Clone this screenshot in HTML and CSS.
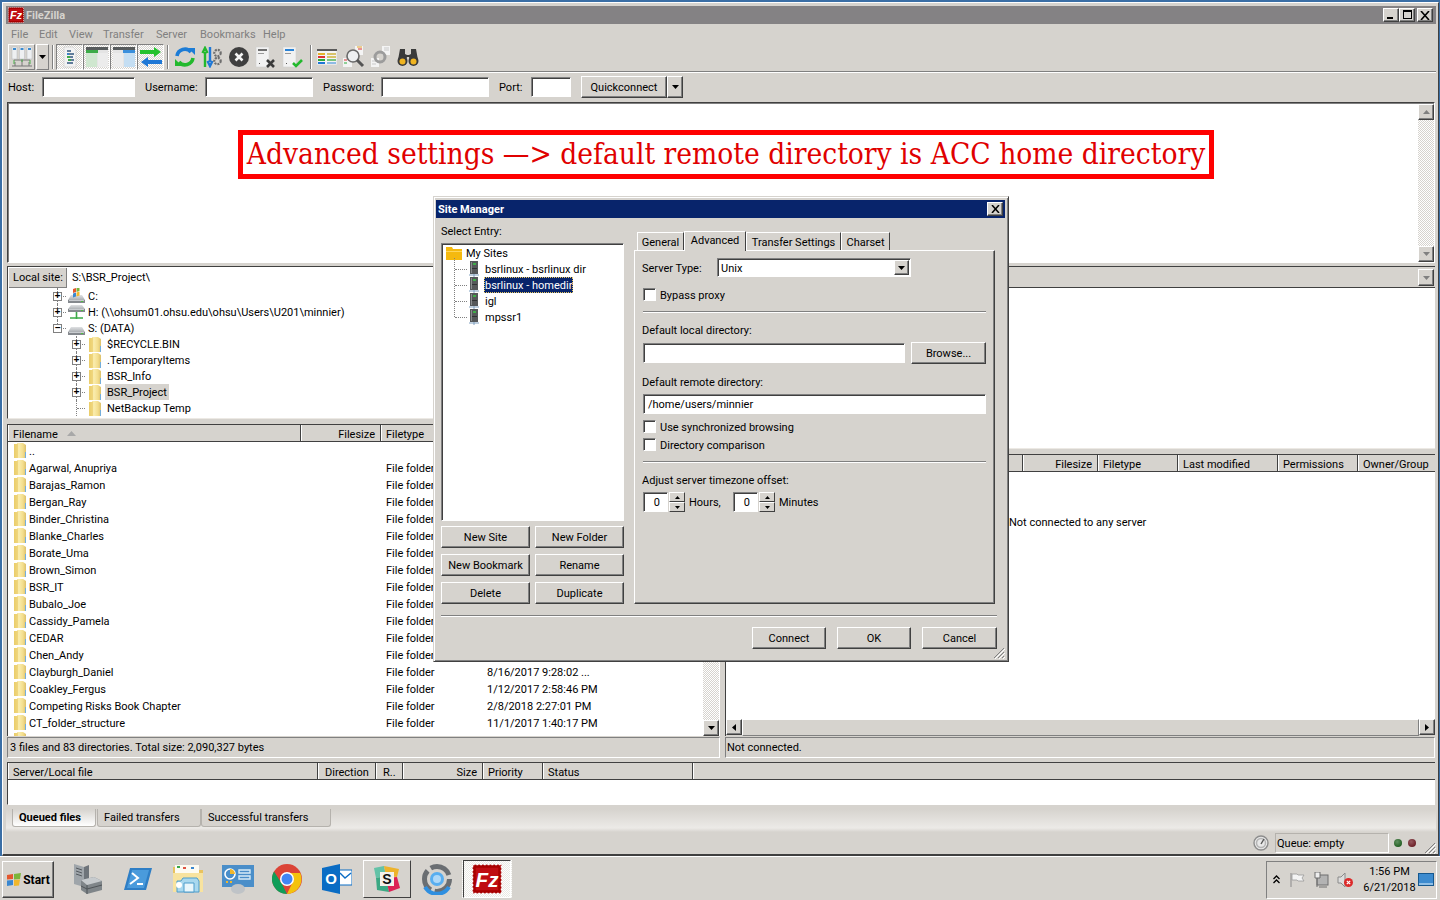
FILE: index.html
```html
<!DOCTYPE html>
<html lang="en">
<head>
<meta charset="utf-8">
<title>FileZilla</title>
<link rel="stylesheet" href="styles.css">
</head>
<body>
<svg class="defs" aria-hidden="true">
  <defs>
    <linearGradient id="fg" x1="0" x2="1" y1="0" y2="0">
      <stop offset="0" stop-color="#e6c65a"/><stop offset=".4" stop-color="#faedae"/><stop offset=".75" stop-color="#f3dd8c"/><stop offset="1" stop-color="#dcc06a"/>
    </linearGradient>
    <linearGradient id="dg" x1="0" x2="0" y1="0" y2="1">
      <stop offset="0" stop-color="#dfe1e3"/><stop offset="1" stop-color="#8b9095"/>
    </linearGradient>
    <symbol id="folder" viewBox="0 0 14 17">
      <path d="M1 2h3l1-1h5l3 2v13H1z" fill="url(#fg)"/>
      <path d="M1 2h3l1-1v15H1z" fill="#ecd070" opacity=".7"/>
      <path d="M12 10h1v6h-1z" fill="#74aedb"/>
    </symbol>
    <symbol id="server" viewBox="0 0 10 16">
      <path d="M5 12v4M0 14h10" stroke="#7f9fbf" fill="none"/>
      <rect x="1" y="0" width="8" height="13" fill="#55585a"/>
      <rect x="2" y="1" width="1" height="11" fill="#8a8d8f"/>
      <rect x="4" y="2" width="3" height="2" fill="#3fae49"/>
      <rect x="3" y="7" width="5" height="1" fill="#303234"/>
    </symbol>
    <symbol id="fz" viewBox="0 0 48 48">
      <rect x="1" y="1" width="46" height="46" fill="#a80000"/>
      <rect x="1" y="1" width="46" height="46" fill="none" stroke="#fff" stroke-width="2" stroke-dasharray="3 3"/>
      <rect x="6" y="6" width="36" height="36" fill="#bf0d12"/>
      <text x="24" y="36" text-anchor="middle" font-family="Liberation Sans" font-size="33" font-weight="700" font-style="italic" fill="#fff">Fz</text>
    </symbol>
    <symbol id="drive" viewBox="0 0 17 16">
      <path d="M3 7h11l3 5v3H0v-3z" fill="url(#dg)"/>
      <path d="M0 12h17v3H0z" fill="#85898e"/>
      <path d="M1 12h15v1H1z" fill="#c9ccd0"/>
      <rect x="13" y="13" width="2" height="1" fill="#4ec13f"/>
    </symbol>
    <symbol id="drive-c" viewBox="0 0 17 16">
      <use href="#drive"/>
      <path d="M5 1l3-1v4l-3 1z" fill="#e4572e"/><path d="M8.500 0l3-1v4l-3 1z" fill="#7cb53a"/>
      <path d="M5 5.500l3-1v4l-3 1z" fill="#3a87d0"/><path d="M8.500 4.500l3-1v4l-3 1z" fill="#f1b72b"/>
    </symbol>
    <symbol id="drive-net" viewBox="0 0 17 16">
      <path d="M3 1h11l3 4v3H0V5z" fill="url(#dg)"/>
      <path d="M0 5h17v3H0z" fill="#85898e"/>
      <path d="M1 5h15v1H1z" fill="#c9ccd0"/>
      <rect x="13" y="6" width="2" height="1" fill="#4ec13f"/>
      <path d="M8.500 8v4M2 14h13M8.500 12v3" stroke="#3cab48" stroke-width="1.600" fill="none"/>
    </symbol>
  </defs>
</svg>

<div class="window">
  <header class="titlebar">
    <svg class="title-logo" width="16" height="16"><use href="#fz"/></svg>
    <span class="title-text">FileZilla</span>
    <div class="caption-btns">
      <button class="caption"><svg width="10" height="10" viewBox="0 0 10 10"><path d="M1 7h6v2H1z"/></svg></button>
      <button class="caption"><svg width="11" height="10" viewBox="0 0 11 10"><path d="M1 0h9v9H1zM2 2v6h7V2z" fill-rule="evenodd"/></svg></button>
      <button class="caption caption-close"><svg width="10" height="9" viewBox="0 0 10 9"><path d="M1 0l8 9M9 0L1 9" stroke="#000" stroke-width="1.6" fill="none"/></svg></button>
    </div>
  </header>

  <nav class="menubar">
    <span class="menu m-file">File</span><span class="menu m-edit">Edit</span><span class="menu m-view">View</span><span class="menu m-transfer">Transfer</span><span class="menu m-server">Server</span><span class="menu m-bookmarks">Bookmarks</span><span class="menu m-help">Help</span>
  </nav>

  <div class="toolbar">
    <button class="tool tool-sm">
      <svg width="22" height="22" viewBox="0 0 22 22">
        <path d="M1 20h20M4 20v-4M11 20v-6M18 20v-4M3 14h16" stroke="#777" fill="none"/>
        <path d="M3 14l0 4M11 12v4M19 14v4" stroke="#4bb04b" fill="none"/>
        <rect x="1" y="1" width="5" height="12" fill="#eef0f2" stroke="#b5b9bd" stroke-width=".5"/><rect x="2" y="2" width="3" height="2" fill="#3c8bd0"/>
        <rect x="8.5" y="1" width="5" height="12" fill="#eef0f2" stroke="#b5b9bd" stroke-width=".5"/><rect x="9.5" y="2" width="3" height="2" fill="#3c8bd0"/>
        <rect x="16" y="1" width="5" height="12" fill="#eef0f2" stroke="#b5b9bd" stroke-width=".5"/><rect x="17" y="2" width="3" height="2" fill="#3c8bd0"/>
      </svg>
    </button>
    <button class="tool-drop"><svg width="7" height="4" viewBox="0 0 7 4"><path d="M0 0h7L3.500 4z"/></svg></button>
    <span class="tool-sep tool-sep-a"></span>
    <button class="tool tool-on">
      <svg width="18" height="22" viewBox="0 0 18 22">
        <path d="M3 1h9l3 3v17H3z" fill="#f2f2f2" stroke="#c9c9c9" stroke-width=".6"/>
        <path d="M6 5h4M7 8h6M6 11h6M7 14h6M6 17h6" stroke-width="2" fill="none" stroke="#607d9b"/>
        <path d="M6 11h3M7 14h3" stroke-width="2" fill="none" stroke="#3ea84c"/>
        <path d="M6 8h2" stroke-width="2" fill="none" stroke="#3a83c9"/>
      </svg>
    </button>
    <button class="tool tool-on">
      <svg width="22" height="20" viewBox="0 0 22 20">
        <rect x="0" y="0" width="22" height="20" fill="#e4e4e4"/>
        <rect x="0" y="0" width="22" height="3" fill="#575b5c"/>
        <rect x="0" y="3" width="12" height="3" fill="#3cab48"/>
        <rect x="0" y="6" width="11" height="14" fill="#cfe7cf"/>
        <rect x="12" y="6" width="10" height="14" fill="#ececec"/>
      </svg>
    </button>
    <button class="tool tool-on">
      <svg width="22" height="20" viewBox="0 0 22 20">
        <rect x="0" y="0" width="22" height="20" fill="#e4e4e4"/>
        <rect x="0" y="0" width="22" height="3" fill="#575b5c"/>
        <rect x="10" y="3" width="12" height="3" fill="#3a8fdc"/>
        <rect x="0" y="6" width="10" height="14" fill="#ececec"/>
        <rect x="11" y="6" width="11" height="14" fill="#c4def3"/>
      </svg>
    </button>
    <button class="tool tool-on">
      <svg width="22" height="20" viewBox="0 0 22 20">
        <path d="M0 3h14V0l7 5-7 5V7H0z" fill="#25c22e"/>
        <path d="M22 13H8v-3l-7 5 7 5v-3h14z" fill="#1f78d6"/>
      </svg>
    </button>
    <span class="tool-sep"></span>
    <span class="ticon ticon-first">
      <svg width="22" height="22" viewBox="0 0 22 22">
        <path d="M3 10a8 8 0 0 1 14-4" stroke="#1c7cd6" stroke-width="3.600" fill="none"/>
        <path d="M14 2h7v7z" fill="#1c7cd6"/>
        <path d="M19 12a8 8 0 0 1-14 4" stroke="#23b92d" stroke-width="3.600" fill="none"/>
        <path d="M8 20H1v-7z" fill="#23b92d"/>
      </svg>
    </span>
    <span class="ticon">
      <svg width="22" height="22" viewBox="0 0 22 22">
        <path d="M4 21V6M1.500 7L4 2l2.500 5" stroke="#23b92d" stroke-width="2.400" fill="none"/>
        <path d="M9 1v15M6.500 15L9 20l2.500-5" stroke="#1f78d6" stroke-width="2.400" fill="none"/>
        <circle cx="16.500" cy="7" r="3.200" fill="none" stroke="#6e6e6e" stroke-width="2.200" stroke-dasharray="2 1"/>
        <circle cx="16.500" cy="15" r="3.200" fill="none" stroke="#6e6e6e" stroke-width="2.200" stroke-dasharray="2 1"/>
      </svg>
    </span>
    <span class="ticon">
      <svg width="22" height="22" viewBox="0 0 22 22">
        <circle cx="11" cy="11" r="10" fill="#3f3f3f"/>
        <path d="M7.500 7.500l7 7M14.500 7.500l-7 7" stroke="#f4f4f4" stroke-width="2.600"/>
      </svg>
    </span>
    <span class="ticon">
      <svg width="22" height="22" viewBox="0 0 22 22">
        <path d="M1 1h13v20H1z" fill="#f2f2f2" stroke="#d0d0d0" stroke-width=".6"/>
        <path d="M3 3h9v2H3z" fill="#6f6f6f"/><path d="M3 7h6v1H3z" fill="#9a9a9a"/>
        <path d="M4 17h1v1H4z" fill="#555"/>
        <path d="M12 14l7 7M19 14l-7 7" stroke="#3a3a3a" stroke-width="2.600"/>
      </svg>
    </span>
    <span class="ticon ticon-end">
      <svg width="22" height="22" viewBox="0 0 22 22">
        <path d="M1 1h13v20H1z" fill="#f2f2f2" stroke="#d0d0d0" stroke-width=".6"/>
        <path d="M3 3h9v2H3z" fill="#2a83d6"/><path d="M3 7h6v1H3z" fill="#9a9a9a"/>
        <path d="M4 17h1v1H4z" fill="#555"/>
        <path d="M11 17l3 3 6-6" stroke="#23b92d" stroke-width="2.600" fill="none"/>
      </svg>
    </span>
    <span class="tool-sep tool-sep-c"></span>
    <span class="ticon">
      <svg width="20" height="16" viewBox="0 0 20 16">
        <rect width="20" height="16" fill="#f4f4f4" stroke="#c7c7c7" stroke-width=".5"/>
        <rect width="20" height="2" fill="#5a5a5a"/>
        <path d="M1 5h7" stroke="#e5b42b" stroke-width="2"/><path d="M1 8h7" stroke="#d33" stroke-width="2"/><path d="M1 11h7" stroke="#2cab3a" stroke-width="2"/><path d="M1 14h7" stroke="#1f78d6" stroke-width="2"/>
        <path d="M10 5h9M10 8h9" stroke="#d8c36a" stroke-width="2"/><path d="M10 11h9" stroke="#7ac47f" stroke-width="2"/><path d="M10 14h9" stroke="#8ebbe4" stroke-width="2"/>
      </svg>
    </span>
    <span class="ticon">
      <svg width="22" height="22" viewBox="0 0 22 22">
        <path d="M12 0h8v9h-8z" fill="#f4f4f4"/><path d="M14 1h5" stroke="#e5a52b"/><path d="M15 3h4" stroke="#d33"/>
        <path d="M0 12h9v9H0z" fill="#f4f4f4"/><path d="M1 14h3" stroke="#d33"/><path d="M1 17h3" stroke="#2cab3a"/>
        <circle cx="10" cy="10" r="6" fill="#eef0f1" stroke="#6a6a6a" stroke-width="1.600"/>
        <path d="M14 14l6 6" stroke="#555" stroke-width="3"/>
      </svg>
    </span>
    <span class="ticon">
      <svg width="20" height="22" viewBox="0 0 20 22">
        <path d="M11 0h8v9h-8zM0 12h8v9H0z" fill="#f4f4f4"/>
        <path d="M13 2h5M13 4h5M1 15h4M1 18h4" stroke="#c9c9c9"/>
        <circle cx="9" cy="11" r="5" fill="none" stroke="#9c9c9c" stroke-width="3"/>
      </svg>
    </span>
    <span class="ticon">
      <svg width="22" height="20" viewBox="0 0 22 20">
        <path d="M3 2h5v5l2 1h2l2-1V2h5l2 11H13l-1-3h-2l-1 3H1z" fill="#3a3a3a"/>
        <circle cx="5.500" cy="14" r="5" fill="#3a3a3a"/><circle cx="16.500" cy="14" r="5" fill="#3a3a3a"/>
        <circle cx="5.500" cy="14.500" r="3" fill="#f0b420"/><circle cx="16.500" cy="14.500" r="3" fill="#f0b420"/>
      </svg>
    </span>
  </div>

  <div class="quickbar">
    <label class="qk-label qk-host">Host:</label><span class="field qk-f1"></span>
    <label class="qk-label qk-user">Username:</label><span class="field qk-f2"></span>
    <label class="qk-label qk-pass">Password:</label><span class="field qk-f3"></span>
    <label class="qk-label qk-port">Port:</label><span class="field qk-f4"></span>
    <button class="btn qk-connect">Quickconnect</button><button class="btn qk-drop"><svg width="7" height="4" viewBox="0 0 7 4"><path d="M0 0h7L3.500 4z"/></svg></button>
  </div>

  <section class="log">
    <div class="vscroll">
      <span class="arrow-btn"><svg width="7" height="4" viewBox="0 0 7 4"><path d="M3.500 0L7 4H0z" fill="#808080"/></svg></span>
      <span class="track"></span>
      <span class="arrow-btn"><svg width="7" height="4" viewBox="0 0 7 4"><path d="M0 0h7L3.500 4z" fill="#808080"/></svg></span>
    </div>
  </section>

  <div class="panes">
    <section class="pane">
      <div class="site-row">
        <span class="site-label">Local site:</span>
        <span class="site-input">S:\BSR_Project\</span>
      </div>
      <div class="tree">
        <div class="tree-row lvl0 line-full"><span class="branch"><i class="twist">+</i></span><svg class="drive-ic" width="17" height="16"><use href="#drive-c"/></svg><span class="node node-d">C:</span></div>
        <div class="tree-row lvl0 line-full"><span class="branch"><i class="twist">+</i></span><svg class="drive-ic" width="17" height="16"><use href="#drive-net"/></svg><span class="node node-d">H: (\\ohsum01.ohsu.edu\ohsu\Users\U201\minnier)</span></div>
        <div class="tree-row lvl0 line-top"><span class="branch"><i class="twist">−</i></span><svg class="drive-ic" width="17" height="16"><use href="#drive"/></svg><span class="node node-d">S: (DATA)</span></div>
        <div class="tree-row lvl1 line-full"><span class="branch"><i class="twist">+</i></span><svg class="folder-ic" width="14" height="17"><use href="#folder"/></svg><span class="node">$RECYCLE.BIN</span></div>
        <div class="tree-row lvl1 line-full"><span class="branch"><i class="twist">+</i></span><svg class="folder-ic" width="14" height="17"><use href="#folder"/></svg><span class="node">.TemporaryItems</span></div>
        <div class="tree-row lvl1 line-full"><span class="branch"><i class="twist">+</i></span><svg class="folder-ic" width="14" height="17"><use href="#folder"/></svg><span class="node">BSR_Info</span></div>
        <div class="tree-row lvl1 line-full"><span class="branch"><i class="twist">+</i></span><svg class="folder-ic" width="14" height="17"><use href="#folder"/></svg><span class="node node-sel">BSR_Project</span></div>
        <div class="tree-row lvl1 line-full"><span class="branch"></span><svg class="folder-ic" width="14" height="17"><use href="#folder"/></svg><span class="node">NetBackup Temp</span></div>
      </div>
      <div class="col-head local-head">
        <span class="col c-name">Filename<svg class="sort" width="9" height="5" viewBox="0 0 9 5"><path d="M4.500 0L9 5H0z" fill="#a8a8a8"/></svg></span>
        <span class="col c-size">Filesize</span>
        <span class="col c-type">Filetype</span>
      </div>
      <div class="list local-list">
        <div class="rows">
          <div class="row"><svg class="row-ic" width="14" height="17"><use href="#folder"/></svg><span class="r-name">..</span></div>
          <div class="row"><svg class="row-ic" width="14" height="17"><use href="#folder"/></svg><span class="r-name">Agarwal, Anupriya</span><span class="r-type">File folder</span></div>
          <div class="row"><svg class="row-ic" width="14" height="17"><use href="#folder"/></svg><span class="r-name">Barajas_Ramon</span><span class="r-type">File folder</span></div>
          <div class="row"><svg class="row-ic" width="14" height="17"><use href="#folder"/></svg><span class="r-name">Bergan_Ray</span><span class="r-type">File folder</span></div>
          <div class="row"><svg class="row-ic" width="14" height="17"><use href="#folder"/></svg><span class="r-name">Binder_Christina</span><span class="r-type">File folder</span></div>
          <div class="row"><svg class="row-ic" width="14" height="17"><use href="#folder"/></svg><span class="r-name">Blanke_Charles</span><span class="r-type">File folder</span></div>
          <div class="row"><svg class="row-ic" width="14" height="17"><use href="#folder"/></svg><span class="r-name">Borate_Uma</span><span class="r-type">File folder</span></div>
          <div class="row"><svg class="row-ic" width="14" height="17"><use href="#folder"/></svg><span class="r-name">Brown_Simon</span><span class="r-type">File folder</span></div>
          <div class="row"><svg class="row-ic" width="14" height="17"><use href="#folder"/></svg><span class="r-name">BSR_IT</span><span class="r-type">File folder</span></div>
          <div class="row"><svg class="row-ic" width="14" height="17"><use href="#folder"/></svg><span class="r-name">Bubalo_Joe</span><span class="r-type">File folder</span></div>
          <div class="row"><svg class="row-ic" width="14" height="17"><use href="#folder"/></svg><span class="r-name">Cassidy_Pamela</span><span class="r-type">File folder</span></div>
          <div class="row"><svg class="row-ic" width="14" height="17"><use href="#folder"/></svg><span class="r-name">CEDAR</span><span class="r-type">File folder</span></div>
          <div class="row"><svg class="row-ic" width="14" height="17"><use href="#folder"/></svg><span class="r-name">Chen_Andy</span><span class="r-type">File folder</span></div>
          <div class="row"><svg class="row-ic" width="14" height="17"><use href="#folder"/></svg><span class="r-name">Clayburgh_Daniel</span><span class="r-type">File folder</span><span class="r-date">8/16/2017 9:28:02 ...</span></div>
          <div class="row"><svg class="row-ic" width="14" height="17"><use href="#folder"/></svg><span class="r-name">Coakley_Fergus</span><span class="r-type">File folder</span><span class="r-date">1/12/2017 2:58:46 PM</span></div>
          <div class="row"><svg class="row-ic" width="14" height="17"><use href="#folder"/></svg><span class="r-name">Competing Risks Book Chapter</span><span class="r-type">File folder</span><span class="r-date">2/8/2018 2:27:01 PM</span></div>
          <div class="row"><svg class="row-ic" width="14" height="17"><use href="#folder"/></svg><span class="r-name">CT_folder_structure</span><span class="r-type">File folder</span><span class="r-date">11/1/2017 1:40:17 PM</span></div>
          <div class="row"><svg class="row-ic" width="14" height="17"><use href="#folder"/></svg></div>
        </div>
        <div class="vscroll vscroll-list">
          <span class="track"></span>
          <span class="arrow-btn"><svg width="7" height="4" viewBox="0 0 7 4"><path d="M0 0h7L3.500 4z"/></svg></span>
        </div>
      </div>
      <div class="pane-status">3 files and 83 directories. Total size: 2,090,327 bytes</div>
    </section>

    <section class="pane">
      <div class="site-row site-row-off">
        <span class="combo-btn"><svg width="7" height="4" viewBox="0 0 7 4"><path d="M0 0h7L3.500 4z" fill="#808080"/></svg></span>
      </div>
      <div class="tree tree-remote"></div>
      <div class="col-head remote-head">
        <span class="col c-rname"></span>
        <span class="col c-rsize">Filesize</span>
        <span class="col c-rtype">Filetype</span>
        <span class="col c-rmod">Last modified</span>
        <span class="col c-rperm">Permissions</span>
        <span class="col c-rown">Owner/Group</span>
      </div>
      <div class="list remote-list">
        <p class="not-conn">Not connected to any server</p>
      </div>
      <div class="hscroll">
        <span class="arrow-btn"><svg width="4" height="7" viewBox="0 0 4 7"><path d="M4 0v7L0 3.500z"/></svg></span>
        <span class="hs-thumb"></span>
        <span class="arrow-btn"><svg width="4" height="7" viewBox="0 0 4 7"><path d="M0 0v7l4-3.500z"/></svg></span>
      </div>
      <div class="pane-status pane-status-r">Not connected.</div>
    </section>
  </div>

  <section class="queue">
    <div class="col-head queue-head">
      <span class="col q-file">Server/Local file</span>
      <span class="col q-dir">Direction</span>
      <span class="col q-r">R..</span>
      <span class="col q-size">Size</span>
      <span class="col q-prio">Priority</span>
      <span class="col q-status">Status</span>
      <span class="col q-rest"></span>
    </div>
    <div class="queue-body"></div>
  </section>

  <div class="tabstrip">
    <span class="qtab qtab-on">Queued files</span>
    <span class="qtab qtab-f">Failed transfers</span>
    <span class="qtab qtab-s">Successful transfers</span>
  </div>

  <footer class="statusbar">
    <svg class="speed" width="16" height="16" viewBox="0 0 16 16">
      <circle cx="8" cy="8" r="7" fill="#e8e8e8" stroke="#8d8d8d" stroke-width="1.400"/>
      <circle cx="8" cy="8" r="4.500" fill="none" stroke="#b5b5b5" stroke-width="1.500"/>
      <path d="M8 9l3-5" stroke="#555" stroke-width="1.400"/>
    </svg>
    <span class="queue-state">Queue: empty</span>
    <span class="led led-g"></span>
    <span class="led led-r"></span>
    <svg class="grip" width="12" height="12" viewBox="0 0 12 12"><path d="M11 1L1 11M11 5l-6 6M11 9l-2 2" stroke="#808080" fill="none"/><path d="M12 2L2 12M12 6l-6 6M12 10l-2 2" stroke="#fff" fill="none"/></svg>
  </footer>
</div>

<div class="banner">Advanced settings —&gt; default remote directory is ACC home directory</div>

<section class="dialog">
  <header class="dlg-title">
    <span class="dlg-name">Site Manager</span>
    <button class="caption dlg-close"><svg width="9" height="8" viewBox="0 0 9 8"><path d="M1 0l7 8M8 0L1 8" stroke="#000" stroke-width="1.500" fill="none"/></svg></button>
  </header>
  <div class="dlg-main">
    <div class="dlg-left">
      <div class="dlg-label">Select Entry:</div>
      <div class="site-tree">
        <div class="st-root">
          <svg width="16" height="13" viewBox="0 0 16 13"><path d="M0 0h6l1 2h9v11H0z" fill="#f5b90f"/><path d="M0 4h16v1H0z" fill="#ffd65a"/></svg>
          <span class="st-root-text">My Sites</span>
        </div>
        <div class="st-item"><span class="st-line"></span><svg width="10" height="16"><use href="#server"/></svg><span class="st-text">bsrlinux - bsrlinux dir</span></div>
        <div class="st-item"><span class="st-line"></span><svg width="10" height="16"><use href="#server"/></svg><span class="st-text st-sel">bsrlinux - homedir</span></div>
        <div class="st-item"><span class="st-line"></span><svg width="10" height="16"><use href="#server"/></svg><span class="st-text">igl</span></div>
        <div class="st-item st-last"><span class="st-line"></span><svg width="10" height="16"><use href="#server"/></svg><span class="st-text">mpssr1</span></div>
      </div>
      <div class="dlg-btns">
        <button class="btn">New Site</button>
        <button class="btn">New Folder</button>
        <button class="btn">New Bookmark</button>
        <button class="btn">Rename</button>
        <button class="btn">Delete</button>
        <button class="btn">Duplicate</button>
      </div>
    </div>
    <div class="dlg-right">
      <div class="tabs">
        <span class="tab tab-g">General</span>
        <span class="tab tab-a">Advanced</span>
        <span class="tab tab-t">Transfer Settings</span>
        <span class="tab tab-c">Charset</span>
      </div>
      <div class="tabpanel">
        <div class="form-row server-row">
          <span class="flabel fl-type">Server Type:</span>
          <span class="field select-field">Unix<span class="combo-btn combo-dark"><svg width="7" height="4" viewBox="0 0 7 4"><path d="M0 0h7L3.500 4z"/></svg></span></span>
        </div>
        <div class="check check-bypass"><span class="box"></span>Bypass proxy</div>
        <hr class="rule rule-1">
        <div class="flabel fl-local">Default local directory:</div>
        <div class="form-row browse-row">
          <span class="field local-field"></span>
          <button class="btn browse">Browse...</button>
        </div>
        <div class="flabel fl-remote">Default remote directory:</div>
        <span class="field remote-field">/home/users/minnier</span>
        <div class="check check-sync"><span class="box"></span>Use synchronized browsing</div>
        <div class="check check-dir"><span class="box"></span>Directory comparison</div>
        <hr class="rule rule-2">
        <div class="flabel fl-tz">Adjust server timezone offset:</div>
        <div class="form-row spin-row">
          <span class="field spin-field">0</span>
          <span class="spin"><span class="spin-b"><svg width="5" height="3" viewBox="0 0 5 3"><path d="M2.500 0L5 3H0z"/></svg></span><span class="spin-b"><svg width="5" height="3" viewBox="0 0 5 3"><path d="M0 0h5L2.500 3z"/></svg></span></span>
          <span class="spin-lab spin-hours">Hours,</span>
          <span class="field spin-field">0</span>
          <span class="spin"><span class="spin-b"><svg width="5" height="3" viewBox="0 0 5 3"><path d="M2.500 0L5 3H0z"/></svg></span><span class="spin-b"><svg width="5" height="3" viewBox="0 0 5 3"><path d="M0 0h5L2.500 3z"/></svg></span></span>
          <span class="spin-lab">Minutes</span>
        </div>
      </div>
    </div>
  </div>
  <hr class="rule dlg-rule">
  <div class="dlg-foot">
    <button class="btn foot-btn">Connect</button>
    <button class="btn foot-btn">OK</button>
    <button class="btn foot-btn foot-last">Cancel</button>
  </div>
  <svg class="dlg-grip" width="12" height="12" viewBox="0 0 12 12"><path d="M11 1L1 11M11 5l-6 6M11 9l-2 2" stroke="#808080" fill="none"/><path d="M12 2L2 12M12 6l-6 6M12 10l-2 2" stroke="#fff" fill="none"/></svg>
</section>

<div class="taskbar">
  <button class="start">
    <svg width="16" height="14" viewBox="0 0 16 14">
      <path d="M1 2l6-1v5l-6 .5z" fill="#e4572e"/><path d="M8 1l7-1-1 6-6 .5z" fill="#7cb53a"/>
      <path d="M1 7.500L7 7v5l-6 1z" fill="#3a87d0"/><path d="M8 7l6-.5-1 6-5 .5z" fill="#f1b72b"/>
    </svg>
    <span>Start</span>
  </button>
  <div class="task-icons">
    <span class="task">
      <svg width="30" height="32" viewBox="0 0 30 32">
        <path d="M1 1l10 3v20L1 21z" fill="#9fa5aa"/><path d="M11 4l5-2v21l-5 2z" fill="#6e747a"/>
        <path d="M3 5l6 2M3 8l6 2M3 11l6 2" stroke="#54595e" fill="none"/>
        <path d="M8 17l13-3 8 4v9l-15 4-6-4z" fill="#7f8589"/><path d="M8 17l13-3 8 4-15 4z" fill="#c6cacd"/>
        <path d="M14 22v9M8 23l6 3 15-4" stroke="#4f5458" fill="none"/>
      </svg>
    </span>
    <span class="task">
      <svg width="28" height="24" viewBox="0 0 28 24">
        <path d="M6 1h22l-6 22H0z" fill="#2e7ec5"/><path d="M8 3h17l-5 18H3z" fill="#4a9bdc"/>
        <path d="M8 6l6 5-8 6" stroke="#fff" stroke-width="2" fill="none"/><path d="M13 17h6" stroke="#fff" stroke-width="2"/>
      </svg>
    </span>
    <span class="task">
      <svg width="32" height="30" viewBox="0 0 32 30">
        <path d="M1 3h10l2 3h18v22H1z" fill="#e9c25e"/>
        <path d="M3 1h24v8H3z" fill="#fdfbf2"/><path d="M5 2h3v2H5z" fill="#3aa84a"/><path d="M11 3h3v2h-3z" fill="#d54"/><path d="M19 3h3v2h-3z" fill="#3a87d0"/>
        <path d="M1 9h30v19H1z" fill="#f8e39f"/>
        <path d="M5 17h4l2-3h14l2 3v11H5z" fill="#a9d8ee" stroke="#4d9ccb"/>
        <path d="M12 19h10v9H12z" fill="#e9f6fb" stroke="#4d9ccb"/>
        <circle cx="7" cy="21" r="3" fill="#fff"/>
      </svg>
    </span>
    <span class="task">
      <svg width="32" height="30" viewBox="0 0 32 30">
        <rect y="1" width="32" height="22" fill="#4a8ec9"/>
        <circle cx="8" cy="10" r="5" fill="none" stroke="#fff" stroke-width="1.600"/><path d="M8 10V5a5 5 0 0 1 5 5z" fill="#f1b72b"/>
        <path d="M17 6h11v3H17zM17 12h11v3H17z" fill="none" stroke="#d7ebf8" stroke-width="1.400"/>
        <path d="M4 18h2M8 18h2" stroke="#f1b72b" stroke-width="2"/>
        <ellipse cx="16" cy="25" rx="7" ry="5" fill="#bfc3c7"/>
      </svg>
    </span>
    <span class="task">
      <svg width="30" height="30" viewBox="0 0 30 30">
        <circle cx="15" cy="15" r="15" fill="#db4437"/>
        <path d="M15 30a15 15 0 0 1-13-22.500L10 20l5 10z" fill="#0f9d58"/>
        <path d="M15 30l6-12.500L15 9h13.200A15 15 0 0 1 15 30z" fill="#f4c20d"/>
        <circle cx="15" cy="15" r="7" fill="#fff"/><circle cx="15" cy="15" r="5.500" fill="#4285f4"/>
      </svg>
    </span>
    <span class="task">
      <svg width="30" height="30" viewBox="0 0 30 30">
        <path d="M17 6h13v15H17z" fill="#fff" stroke="#0a6cc4"/>
        <path d="M18 9l5 5 6-5" stroke="#0a6cc4" stroke-width="1.400" fill="none"/>
        <path d="M0 4l18-4v30L0 26z" fill="#0a6cc4"/>
        <text x="9" y="20" text-anchor="middle" font-family="Liberation Sans" font-size="15" font-weight="700" fill="#fff">O</text>
      </svg>
    </span>
    <span class="task task-raised">
      <svg width="26" height="26" viewBox="0 0 26 26">
        <path d="M0 2l10-2 2 10L2 12z" fill="#63c2a7"/>
        <path d="M10 0l15 3-2 8-11-1z" fill="#edb32c"/>
        <path d="M2 12l10-2 3 16-12-2z" fill="#3ba883"/>
        <path d="M12 12l11-1 3 11-11 4z" fill="#dc2155"/>
        <rect x="6" y="6" width="14" height="14" fill="#f4f1ea"/>
        <text x="13" y="18" text-anchor="middle" font-family="Liberation Sans" font-size="14" font-weight="700" fill="#111">S</text>
      </svg>
    </span>
    <span class="task">
      <svg width="32" height="32" viewBox="0 0 32 32">
        <circle cx="16" cy="16" r="12.500" fill="none" stroke="#6a6e72" stroke-width="5" stroke-dasharray="22 4"/>
        <path d="M4 24a14 14 0 0 0 24 0" stroke="#2f8fe0" stroke-width="4" fill="none"/>
        <circle cx="16" cy="16" r="7" fill="#58aef0"/><circle cx="16" cy="16" r="4" fill="#aed8f8"/>
      </svg>
    </span>
    <span class="task task-pressed"><svg width="30" height="30"><use href="#fz"/></svg></span>
  </div>
  <div class="tray">
    <svg class="tray-ic" width="7" height="9" viewBox="0 0 7 9"><path d="M.5 4l3-3 3 3M.5 8l3-3 3 3" stroke="#000" stroke-width="1.300" fill="none"/></svg>
    <svg class="tray-ic tray-flag" width="16" height="16" viewBox="0 0 16 16"><path d="M1.500 1v14h1V1z" fill="#8a8a8a"/><path d="M3 2h5l1 1h6l-2 3 2 3H9L8 8H3z" fill="#f4f4f4" stroke="#9a9a9a" stroke-width=".8"/></svg>
    <svg class="tray-ic" width="16" height="16" viewBox="0 0 16 16"><rect x="4" y="3" width="11" height="10" fill="#b3b3b3" stroke="#6e6e6e"/><path d="M2 0h5v6H2zM4 6v9" fill="#eee" stroke="#6e6e6e"/><path d="M6 15h8" stroke="#6e6e6e"/></svg>
    <svg class="tray-ic" width="16" height="16" viewBox="0 0 16 16"><path d="M1 5h3l4-4v14l-4-4H1z" fill="#ddd" stroke="#8a8a8a"/><circle cx="11.500" cy="10.500" r="4.500" fill="#dc2a2a"/><path d="M9.800 8.800l3.400 3.400M13.200 8.800l-3.400 3.400" stroke="#fff" stroke-width="1.200"/></svg>
    <div class="clock"><div>1:56 PM</div><div>6/21/2018</div></div>
    <svg class="tray-show" width="16" height="13" viewBox="0 0 16 13"><rect width="16" height="13" fill="#16588e"/><rect x="1" y="1" width="14" height="9" fill="#3c8bcf"/><path d="M1 10h14v2H1z" fill="#8fbfe6"/></svg>
  </div>
</div>
</body>
</html>
```

FILE: styles.css
```css
* { box-sizing: border-box; }
html, body { margin: 0; height: 100%; }
body {
  width: 1440px;
  height: 900px;
  overflow: hidden;
  position: relative;
  display: flex;
  flex-direction: column;
  background: #3a6ea5;
  font: 11px/14px Roboto, "Liberation Sans", Arial, sans-serif;
  color: #000;
}
button {
  font: inherit;
  color: inherit;
  padding: 0;
  margin: 0;
  cursor: default;
}
.defs { position: absolute; width: 0; height: 0; }

/* shared chrome */
.btn {
  height: 22px;
  padding-top: 2px;
  background: #d6d3ce;
  border: 1px solid;
  border-color: #fff #404040 #404040 #fff;
  box-shadow: inset -1px -1px 0 #808080;
}
.field {
  display: block;
  height: 20px;
  background: #fff;
  border: 1px solid;
  border-color: #808080 #fff #fff #808080;
  box-shadow: inset 1px 1px 0 #404040;
  padding: 3px 0 0 4px;
}

/* main window */
.window {
  width: 1437px;
  height: 854px;
  margin: 2px 0 0 2px;
  padding: 3px 2px 0 3px;
  border: 1px solid #fff;
  border-right: 1px solid #404040;
  border-bottom: 2px solid #404040;
  background: #d6d3ce;
  flex: none;
  display: flex;
  flex-direction: column;
}
.titlebar {
  height: 18px;
  flex: none;
  background: #848284;
  display: flex;
  align-items: center;
  padding: 0 3px 0 2px;
}
.title-text { margin-left: 2px; padding-top: 2px; font-weight: 700; font-size: 11px; color: #d6d3ce; }
.caption-btns { margin-left: auto; display: flex; }
.caption {
  width: 16px;
  height: 14px;
  background: #d6d3ce;
  border: 1px solid;
  border-color: #fff #404040 #404040 #fff;
  box-shadow: inset -1px -1px 0 #808080;
  display: flex;
  align-items: center;
  justify-content: center;
}
.caption-close { margin-left: 2px; }

.menubar {
  height: 18px;
  margin-top: 1px;
  flex: none;
  display: flex;
  align-items: center;
  color: #808080;
}
.menu { padding-top: 2px; }
.m-file { margin-left: 5px; width: 28px; }
.m-edit { width: 30px; }
.m-view { width: 34px; }
.m-transfer { width: 53px; }
.m-server { width: 44px; }
.m-bookmarks { width: 63px; }

.toolbar {
  height: 28px;
  margin-top: 1px;
  flex: none;
  display: flex;
  align-items: flex-start;
  border-bottom: 1px solid #808080;
  padding-left: 2px;
}
.tool {
  width: 27px;
  height: 26px;
  display: flex;
  align-items: center;
  justify-content: center;
  background: #d6d3ce;
  border: 1px solid;
  flex: none;
}
.tool-sm { border-color: #fff #808080 #808080 #fff; }
.tool-drop {
  width: 13px;
  height: 26px;
  margin-left: 1px;
  background: #d6d3ce;
  border: 1px solid;
  border-color: #fff #808080 #808080 #fff;
  display: flex;
  align-items: center;
  justify-content: center;
}
.tool-on {
  border-color: #808080 #fff #fff #808080;
  background: repeating-conic-gradient(#fff 0 25%, #d6d3ce 0 50%) 0 0 / 2px 2px;
}
.tool-sep {
  width: 2px;
  height: 24px;
  margin: 1px 3px 0;
  border-left: 1px solid #808080;
  border-right: 1px solid #fff;
  flex: none;
}
.tool-sep-a { margin: 1px 2px 0 3px; }
.tool-sep-c { margin: 1px 4px 0 1px; }
.ticon {
  width: 22px;
  height: 26px;
  display: flex;
  align-items: center;
  justify-content: center;
  flex: none;
  margin-right: 5px;
}
.ticon-first { margin-left: 2px; }

.quickbar {
  height: 30px;
  flex: none;
  display: flex;
  align-items: center;
  border-top: 1px solid #fff;
  padding-bottom: 2px;
}
.qk-label { padding-top: 2px; }
.qk-host { margin-left: 2px; width: 34px; }
.qk-f1 { width: 93px; }
.qk-user { margin-left: 10px; width: 60px; }
.qk-f2 { width: 108px; }
.qk-pass { margin-left: 10px; width: 58px; }
.qk-f3 { width: 108px; }
.qk-port { margin-left: 10px; width: 32px; }
.qk-f4 { width: 40px; }
.qk-connect { margin-left: 10px; width: 86px; height: 22px; }
.qk-drop { width: 16px; height: 22px; padding: 0; display: flex; align-items: center; justify-content: center; }

.log {
  height: 161px;
  margin: 0 1px;
  flex: none;
  background: #fff;
  border: 1px solid;
  border-color: #404040 #fff #fff #404040;
  box-shadow: inset 1px 1px 0 #808080;
  display: flex;
  justify-content: flex-end;
  padding-top: 1px;
}
.vscroll {
  width: 16px;
  display: flex;
  flex-direction: column;
}
.arrow-btn {
  flex: none;
  width: 16px;
  height: 16px;
  display: flex;
  align-items: center;
  justify-content: center;
  background: #d6d3ce;
  border: 1px solid;
  border-color: #fff #404040 #404040 #fff;
  box-shadow: inset -1px -1px 0 #808080;
}
.track {
  flex: 1;
  background: repeating-conic-gradient(#fff 0 25%, #d6d3ce 0 50%) 0 0 / 2px 2px;
}

/* panes */
.panes {
  height: 492px;
  margin: 3px 1px 0;
  flex: none;
  display: grid;
  grid-template-columns: 713px 710px;
  grid-template-rows: 492px;
  column-gap: 5px;
}
.pane { display: flex; flex-direction: column; min-width: 0; min-height: 0; }
.site-row {
  height: 22px;
  flex: none;
  display: flex;
  border-top: 1px solid #404040;
  border-left: 1px solid #404040;
  background: #fff;
}
.site-label {
  width: 60px;
  background: #d6d3ce;
  border-right: 1px solid #fff;
  padding: 4px 0 0 5px;
  box-shadow: inset 1px 1px 0 #fff, inset -1px -1px 0 #808080;
}
.site-input { padding: 4px 0 0 4px; }
.site-row-off {
  background: #d6d3ce;
  justify-content: flex-end;
  border-bottom: 1px solid #404040;
  padding: 2px 1px 0 0;
}
.combo-btn {
  width: 16px;
  height: 17px;
  display: flex;
  align-items: center;
  justify-content: center;
  background: #d6d3ce;
  border: 1px solid;
  border-color: #fff #404040 #404040 #fff;
  box-shadow: inset -1px -1px 0 #808080;
}
.tree {
  height: 131px;
  flex: none;
  overflow: hidden;
  background: #fff;
  border-left: 1px solid #404040;
  border-bottom: 1px solid #ece9e4;
  padding-top: 0;
}
.tree-remote { height: 161px; }
.tree-row {
  height: 16px;
  display: flex;
  align-items: center;
}
.lvl0 { padding-left: 42px; }
.lvl1 { padding-left: 61px; }
.branch {
  position: relative;
  width: 15px;
  height: 16px;
  flex: none;
  display: flex;
  align-items: center;
  justify-content: center;
}
.branch::before {
  content: "";
  position: absolute;
  left: 7px;
  width: 1px;
  top: 0;
  bottom: 0;
  border-left: 1px dotted #808080;
}
.line-top .branch::before { bottom: 8px; }
.branch::after {
  content: "";
  position: absolute;
  left: 8px;
  right: -1px;
  top: 8px;
  height: 1px;
  border-top: 1px dotted #808080;
}
.twist {
  position: relative;
  z-index: 1;
  width: 9px;
  height: 9px;
  border: 1px solid #808080;
  background: #fff;
  font: 700 10px/7px "Liberation Mono", monospace;
  text-align: center;
}
.drive-ic { margin-left: 3px; flex: none; }
.folder-ic { margin-left: 4px; flex: none; }
.node { padding: 2px 2px 0; margin-left: 3px; white-space: nowrap; }
.node-d { margin-left: 1px; }
.node-sel { background: #d6d3ce; }

.col-head {
  height: 18px;
  flex: none;
  margin-top: 5px;
  display: flex;
  background: #d6d3ce;
  border-top: 1px solid #404040;
  border-bottom: 1px solid #404040;
  border-left: 1px solid #404040;
}
.col {
  flex: none;
  height: 16px;
  padding: 3px 0 0 5px;
  border-right: 1px solid #404040;
  box-shadow: inset 1px 0 0 #fff;
  white-space: nowrap;
}
.c-name { width: 293px; display: flex; gap: 9px; }
.sort { margin-top: 3px; }
.c-size { width: 80px; text-align: right; padding-right: 5px; }
.c-type { width: 100px; }
.list {
  flex: 1;
  min-height: 0;
  display: flex;
  background: #fff;
  overflow: hidden;
  border-left: 1px solid #404040;
  position: relative;
}
.rows { flex: 1; min-width: 0; overflow: hidden; }
.row {
  height: 17px;
  display: flex;
  align-items: center;
  padding-left: 5px;
}
.row-ic { flex: none; }
.r-name { width: 357px; margin-left: 2px; padding-top: 2px; white-space: nowrap; }
.r-type { width: 101px; padding-top: 2px; white-space: nowrap; }
.r-date { padding-top: 2px; white-space: nowrap; }
.vscroll-list { margin-right: 1px; }
.pane-status {
  height: 21px;
  flex: none;
  margin-top: 1px;
  padding: 3px 0 0 2px;
  background: #d6d3ce;
  border-top: 1px solid #808080;
  border-left: 1px solid #808080;
  border-bottom: 1px solid #fff;
  border-right: 1px solid #fff;
  white-space: nowrap;
}
.pane-status-r { padding-left: 1px; }
.remote-head { margin-top: 5px; }
.c-rname { width: 297px; }
.c-rsize { width: 75px; text-align: right; padding-right: 5px; }
.c-rtype { width: 80px; }
.c-rmod { width: 100px; }
.c-rperm { width: 80px; }
.c-rown { width: 76px; border-right: 0; }
.not-conn { margin: 44px 0 0 283px; white-space: nowrap; }
.hscroll {
  height: 17px;
  flex: none;
  display: flex;
  background: #d6d3ce;
  border-left: 1px solid #404040;
}
.hs-thumb {
  flex: 1;
  border: 1px solid;
  border-color: #fff #808080 #808080 #fff;
}

/* queue */
.queue { margin: 4px 1px 0; flex: none; }
.queue-head { margin-top: 0; }
.q-file { width: 310px; }
.q-dir { width: 58px; padding-left: 7px; }
.q-r { width: 27px; padding-left: 7px; }
.q-size { width: 80px; text-align: right; padding-right: 5px; }
.q-prio { width: 60px; }
.q-status { width: 150px; }
.q-rest { flex: 1; border-right: 0; }
.queue-body {
  height: 25px;
  background: #fff;
  border-left: 1px solid #404040;
  border-bottom: 1px solid #fff;
}

.tabstrip {
  height: 27px;
  flex: none;
  padding: 4px 0 0 6px;
  display: flex;
  align-items: flex-start;
  background: linear-gradient(#d6d3ce 0, #d6d3ce 15%, #eceae7 85%, #d6d3ce 100%);
}
.qtab {
  height: 18px;
  padding: 2px 0 0 6px;
  border: 1px solid #b5b2ad;
  border-top: 0;
  border-radius: 0 0 3px 3px;
  background: #d6d3ce;
  white-space: nowrap;
}
.qtab-on { width: 84px; background: linear-gradient(#d6d3ce, #fff); font-weight: 700; }
.qtab-f { width: 104px; margin-left: 1px; }
.qtab-s { width: 130px; }

.statusbar {
  height: 22px;
  flex: none;
  display: flex;
  align-items: center;
  justify-content: flex-end;
  position: relative;
}
.speed { margin-right: 6px; }
.queue-state {
  width: 114px;
  height: 20px;
  padding: 3px 0 0 1px;
  border: 1px solid;
  border-color: #b5b2ad #fff #fff #b5b2ad;
  margin-right: 5px;
}
.led { width: 8px; height: 8px; border-radius: 50%; margin-left: 0; margin-right: 6px; }
.led-g { background: radial-gradient(circle at 40% 35%, #5f8f5f, #0c4d0c); }
.led-r { background: radial-gradient(circle at 40% 35%, #96585e, #5c0c14); margin-right: 20px; }
.grip { position: absolute; right: 0; bottom: 0; }

/* annotation over the log */
.banner {
  position: absolute;
  left: 238px;
  top: 130px;
  width: 976px;
  height: 49px;
  border: 5px solid #f00;
  background: #fff;
  color: #e00000;
  font: 29.6px/39px "DejaVu Serif Condensed", "DejaVu Serif", serif;
  font-stretch: condensed;
  text-align: center;
  white-space: nowrap;
}

/* site manager */
.dialog {
  position: absolute;
  left: 433px;
  top: 196px;
  width: 576px;
  height: 466px;
  padding: 3px 3px 0 2px;
  background: #d6d3ce;
  border: 1px solid;
  border-color: #d6d3ce #404040 #404040 #d6d3ce;
  box-shadow: inset 1px 1px 0 #fff, inset -1px -1px 0 #808080;
}
.dlg-title {
  height: 18px;
  background: #08246b;
  color: #fff;
  font-weight: 700;
  padding-left: 2px;
  display: flex;
  align-items: center;
  justify-content: space-between;
}
.dlg-name { padding-top: 2px; }
.dlg-close { margin-right: 2px; }
.dlg-main {
  display: grid;
  grid-template-columns: 183px 361px;
  column-gap: 10px;
  padding-left: 5px;
}
.dlg-label { margin-top: 7px; }
.site-tree {
  height: 278px;
  margin-top: 4px;
  background: #fff;
  border: 1px solid;
  border-color: #808080 #fff #fff #808080;
  box-shadow: inset 1px 1px 0 #404040;
  padding: 1px 0 0 4px;
}
.st-root { height: 16px; display: flex; align-items: center; gap: 4px; }
.st-root-text { padding-top: 2px; }
.st-item { height: 16px; display: flex; align-items: center; position: relative; padding-left: 23px; }
.st-line {
  position: absolute;
  left: 8px;
  top: -3px;
  bottom: 0;
  width: 13px;
  border-left: 1px dotted #808080;
}
.st-line::after {
  content: "";
  position: absolute;
  left: 0;
  right: 0;
  top: 11px;
  border-top: 1px dotted #808080;
}
.st-last .st-line { bottom: 8px; }
.st-text { margin-left: 5px; padding: 2px 1px 0; white-space: nowrap; }
.st-sel {
  background: #08246b;
  color: #fff;
  outline: 1px dotted #e8c860;
  outline-offset: -1px;
}
.dlg-btns {
  margin-top: 5px;
  display: grid;
  grid-template-columns: 89px 89px;
  column-gap: 5px;
  row-gap: 6px;
}
.dlg-right { padding-top: 12px; }
.tabs {
  height: 20px;
  padding-left: 3px;
  display: flex;
  align-items: flex-end;
}
.tab {
  height: 18px;
  padding-top: 3px;
  text-align: center;
  border-top: 1px solid #fff;
  border-left: 1px solid #fff;
  border-right: 1px solid #404040;
  white-space: nowrap;
  flex: none;
}
.tab-g { width: 47px; }
.tab-a {
  width: 62px;
  height: 20px;
  padding-top: 2px;
  margin-bottom: -1px;
  background: #d6d3ce;
  position: relative;
  z-index: 1;
}
.tab-t { width: 95px; }
.tab-c { width: 49px; }
.tabpanel {
  height: 354px;
  padding: 7px 8px 0;
  border: 1px solid;
  border-color: #fff #404040 #404040 #fff;
  box-shadow: inset -1px -1px 0 #808080;
}
.form-row { display: flex; align-items: center; }
.flabel { margin-left: -1px; height: 14px; padding-top: 1px; }
.server-row { height: 19px; }
.fl-type { width: 75px; }
.select-field {
  width: 194px;
  height: 19px;
  padding: 3px 0 0 3px;
  position: relative;
}
.combo-dark {
  position: absolute;
  right: 1px;
  top: 1px;
  width: 15px;
  height: 15px;
}
.check { display: flex; align-items: flex-start; height: 13px; line-height: 15px; }
.box {
  width: 13px;
  height: 13px;
  margin-right: 4px;
  background: #fff;
  border: 1px solid;
  border-color: #808080 #fff #fff #808080;
  box-shadow: inset 1px 1px 0 #404040;
  flex: none;
}
.check-bypass { margin-top: 11px; }
.rule {
  height: 2px;
  margin: 0;
  border: 0;
  border-top: 1px solid #808080;
  border-bottom: 1px solid #fff;
}
.rule-1 { margin-top: 10px; }
.fl-local { margin-top: 10px; }
.browse-row { margin-top: 5px; height: 22px; gap: 6px; }
.local-field { width: 262px; }
.browse { width: 75px; }
.fl-remote { margin-top: 11px; }
.remote-field { width: 343px; margin-top: 5px; }
.check-sync { margin-top: 6px; }
.check-dir { margin-top: 5px; }
.rule-2 { margin-top: 10px; }
.fl-tz { margin-top: 10px; }
.spin-row { margin-top: 5px; height: 20px; }
.spin-field { width: 25px; text-align: right; padding: 3px 7px 0 0; }
.spin { width: 16px; height: 20px; margin-left: 1px; display: flex; flex-direction: column; }
.spin-b {
  height: 10px;
  display: flex;
  align-items: center;
  justify-content: center;
  background: #d6d3ce;
  border: 1px solid;
  border-color: #fff #404040 #404040 #fff;
}
.spin-lab { margin-left: 4px; padding-top: 2px; }
.spin-hours { width: 44px; }
.dlg-rule { margin: 11px 8px 0 5px; }
.dlg-foot {
  margin-top: 10px;
  display: flex;
  justify-content: flex-end;
  gap: 11px;
  padding-right: 8px;
}
.foot-btn { width: 74px; }
.foot-last { width: 75px; }
.dlg-grip { position: absolute; right: 3px; bottom: 2px; }

/* taskbar */
.taskbar {
  height: 44px;
  flex: none;
  background: #d6d3ce;
  border-top: 1px solid #fff;
  display: flex;
  align-items: center;
  padding-left: 2px;
}
.start {
  width: 52px;
  height: 37px;
  margin-top: 2px;
  background: #d6d3ce;
  border: 1px solid;
  border-color: #fff #404040 #404040 #fff;
  box-shadow: inset -1px -1px 0 #808080;
  display: flex;
  align-items: center;
  justify-content: center;
  gap: 1px;
  font-weight: 700;
  font-size: 12px;
}
.task-icons { display: flex; margin-left: 9px; margin-top: 1px; }
.task {
  width: 49.875px;
  height: 38px;
  display: flex;
  align-items: center;
  justify-content: center;
  flex: none;
}
.task-raised svg, .task-pressed svg { flex: none; }
.task-raised {
  background: linear-gradient(#d6d3ce, #d6d3ce) center / 48px 38px no-repeat;
  position: relative;
}
.task-raised::after, .task-pressed::after {
  content: "";
  position: absolute;
  inset: 0 1px;
  border: 1px solid;
}
.task-raised::after { border-color: #fff #404040 #404040 #fff; }
.task-pressed { position: relative; }
.task-pressed::after { border-color: #404040 #fff #fff #404040; }
.task-pressed {
  background: repeating-conic-gradient(#fff 0 25%, #e9e7e3 0 50%) center / 2px 2px;
  background-size: 2px 2px;
}
.tray {
  margin-left: auto;
  margin-right: 3px;
  margin-top: 2px;
  width: 171px;
  height: 38px;
  border: 1px solid;
  border-color: #808080 #fff #fff #808080;
  display: flex;
  align-items: center;
  padding-left: 6px;
}
.tray-ic { margin-right: 8px; flex: none; }
.tray-flag { margin-left: 1px; }
.clock { width: 57px; text-align: center; line-height: 16px; flex: none; }
.tray-show { flex: none; }
```
